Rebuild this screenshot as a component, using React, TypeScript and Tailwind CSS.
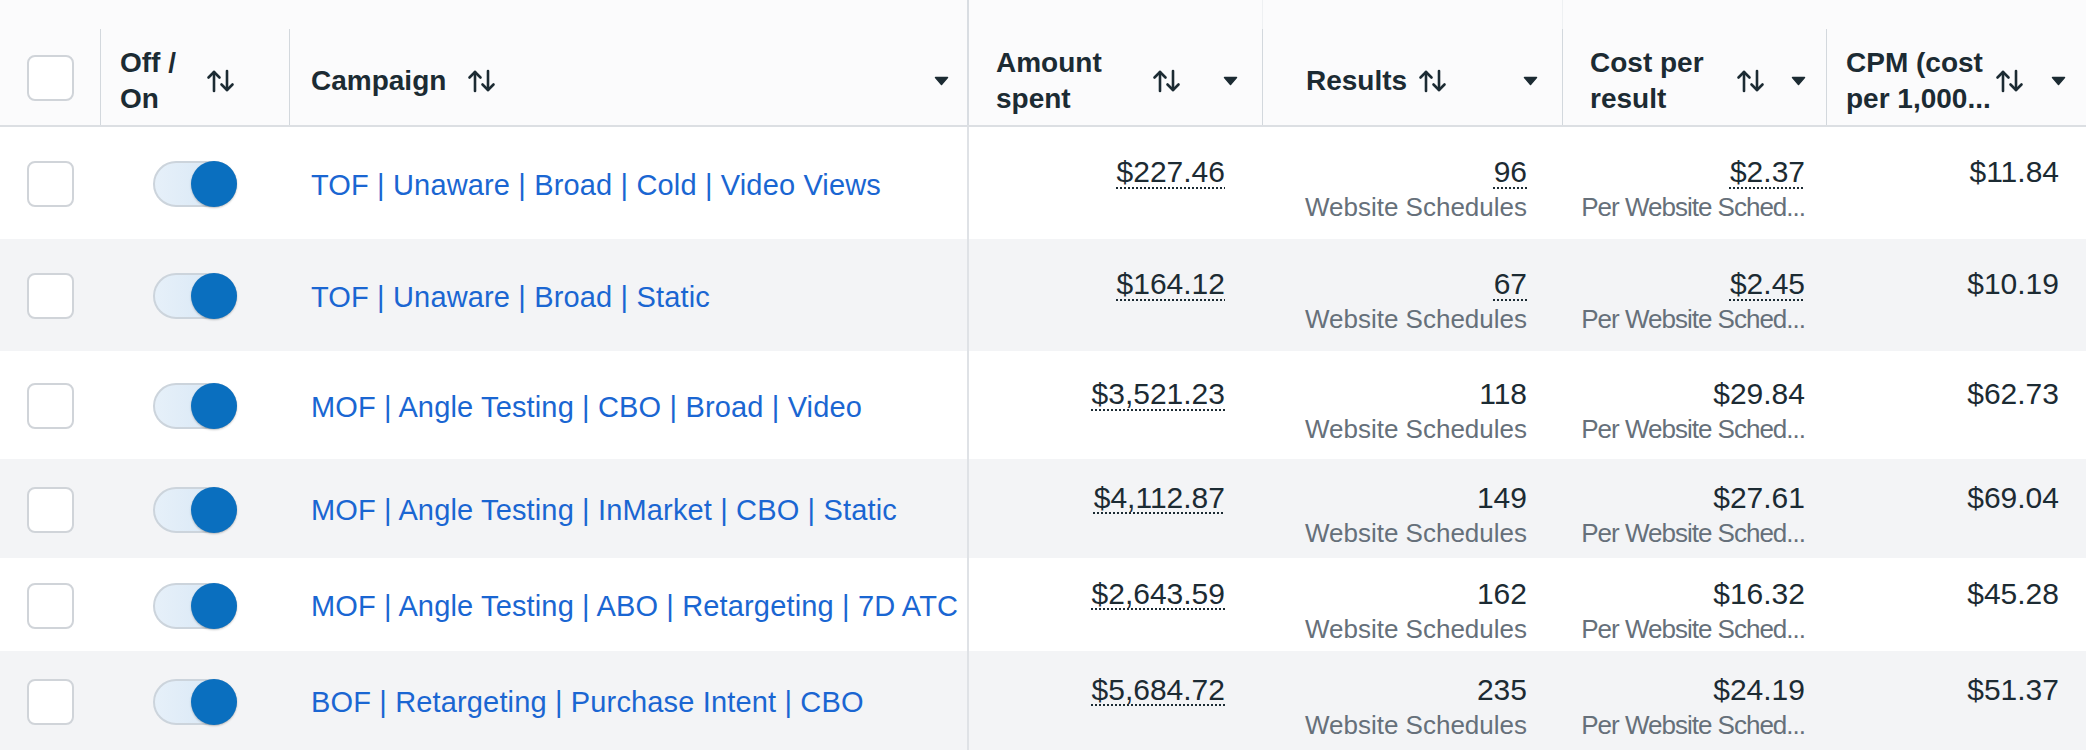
import React from "react";

const SortIcon = () => (
  <svg width="30" height="24" viewBox="0 0 30 24" fill="none" className="shrink-0">
    <path d="M8 22V3" stroke="#1c2b33" strokeWidth="2.6" strokeLinecap="round" />
    <path d="M2.5 8.5L8 3l5.5 5.5" stroke="#1c2b33" strokeWidth="2.6" strokeLinecap="round" strokeLinejoin="round" />
    <path d="M21 2v19" stroke="#1c2b33" strokeWidth="2.6" strokeLinecap="round" />
    <path d="M15.5 15.5L21 21l5.5-5.5" stroke="#1c2b33" strokeWidth="2.6" strokeLinecap="round" strokeLinejoin="round" />
  </svg>
);

const Caret = () => (
  <svg width="15" height="10" viewBox="0 0 15 10" className="shrink-0">
    <path d="M1.5 1.5h12L7.5 8.5z" fill="#1c2b33" stroke="#1c2b33" strokeWidth="1.5" strokeLinejoin="round" />
  </svg>
);

const Checkbox = () => (
  <div className="w-[47px] h-[46px] rounded-[8px] border-2 border-[#d0d4d9] bg-white" />
);

const Toggle = () => (
  <div className="relative w-[84px] h-[46px] rounded-full border-2 border-[#ccd4dc] bg-gradient-to-r from-[#e6f0f9] to-[#d6e6f5]">
    <div className="absolute -right-[2px] -top-[2px] w-[46px] h-[46px] rounded-full bg-[#0a6fbf] shadow-[0_1px_2px_rgba(0,0,0,0.25)]" />
  </div>
);

type Row = {
  name: string;
  spent: string;
  results: string;
  cost: string;
  cpm: string;
  ul: boolean;
  h: string;
  bg: string;
};

const rows: Row[] = [
  { name: "TOF | Unaware | Broad | Cold | Video Views", spent: "$227.46", results: "96", cost: "$2.37", cpm: "$11.84", ul: true, h: "h-[112px]", bg: "bg-white" },
  { name: "TOF | Unaware | Broad | Static", spent: "$164.12", results: "67", cost: "$2.45", cpm: "$10.19", ul: true, h: "h-[112px]", bg: "bg-[#f3f4f6]" },
  { name: "MOF | Angle Testing | CBO | Broad | Video", spent: "$3,521.23", results: "118", cost: "$29.84", cpm: "$62.73", ul: false, h: "h-[108px]", bg: "bg-white" },
  { name: "MOF | Angle Testing | InMarket | CBO | Static", spent: "$4,112.87", results: "149", cost: "$27.61", cpm: "$69.04", ul: false, h: "h-[99px]", bg: "bg-[#f3f4f6]" },
  { name: "MOF | Angle Testing | ABO | Retargeting | 7D ATC", spent: "$2,643.59", results: "162", cost: "$16.32", cpm: "$45.28", ul: false, h: "h-[93px]", bg: "bg-white" },
  { name: "BOF | Retargeting | Purchase Intent | CBO", spent: "$5,684.72", results: "235", cost: "$24.19", cpm: "$51.37", ul: false, h: "h-[99px]", bg: "bg-[#f3f4f6]" },
];

const Num = ({ v, ul, sub, tight }: { v: string; ul: boolean; sub?: string; tight?: boolean }) => (
  <div className="flex flex-col items-end pt-[12px]">
    <div className="leading-[36px] text-[30px] text-[#1c2b33] whitespace-nowrap">
      {ul ? (
        <span className="underline decoration-dotted decoration-[2px] underline-offset-[5px] decoration-[#1c2b33]">{v}</span>
      ) : (
        v
      )}
    </div>
    <div
      className={`h-[34px] leading-[34px] text-[26px] text-[#66707a] whitespace-nowrap ${
        tight ? "tracking-[-1px]" : ""
      }`}
    >
      {sub ?? ""}
    </div>
  </div>
);

const cols = "grid grid-cols-[100px_189px_678px_295px_300px_264px_260px]";

export default function App() {
  return (
    <div className="w-[2086px] h-[754px] overflow-hidden bg-white font-['Liberation_Sans',Arial,sans-serif]">
      {/* Header */}
      <div className={`${cols} h-[127px] bg-[#fbfbfc] border-b-2 border-[#dcdfe3] text-[28px] font-bold text-[#1c2b33]`}>
        <div className="pt-[29px] flex">
          <div className="flex-1 flex items-center pl-[27px] pt-[2px]">
            <Checkbox />
          </div>
        </div>
        <div className="pt-[29px] flex">
          <div className="flex-1 flex items-center border-l border-[#d3d8dd] pl-[19px] pt-[8px]">
            <div className="w-[86px] leading-[36px]">
              <div>Off /</div>
              <div>On</div>
            </div>
            <SortIcon />
          </div>
        </div>
        <div className="pt-[29px] flex">
          <div className="flex-1 flex items-center border-l border-[#d3d8dd] pl-[21px] pr-[18px] pt-[8px]">
            <span className="leading-[36px]">Campaign</span>
            <span className="ml-[21px]">
              <SortIcon />
            </span>
            <span className="ml-auto">
              <Caret />
            </span>
          </div>
        </div>
        <div className="flex border-l-2 border-[#d9dde2]">
          <div className="flex-1 flex items-center pt-[37px] pl-[27px] pr-[24px]">
            <div className="w-[156px] leading-[36px]">
              <div>Amount</div>
              <div>spent</div>
            </div>
            <SortIcon />
            <span className="ml-auto">
              <Caret />
            </span>
          </div>
        </div>
        <div className="flex flex-col border-l border-[#eef0f2]">
          <div className="h-[29px]" />
          <div className="flex-1 flex items-center pl-[43px] pr-[24px] -ml-px border-l border-[#d3d8dd] pt-[8px]">
            <span className="leading-[36px]">Results</span>
            <span className="ml-[11px]">
              <SortIcon />
            </span>
            <span className="ml-auto">
              <Caret />
            </span>
          </div>
        </div>
        <div className="flex flex-col border-l border-[#eef0f2]">
          <div className="h-[29px]" />
          <div className="flex-1 flex items-center pl-[27px] pr-[20px] -ml-px border-l border-[#d3d8dd] pt-[8px]">
            <div className="w-[146px] leading-[36px] whitespace-nowrap">
              <div>Cost per</div>
              <div>result</div>
            </div>
            <SortIcon />
            <span className="ml-auto">
              <Caret />
            </span>
          </div>
        </div>
        <div className="pt-[29px] flex">
          <div className="flex-1 flex items-center border-l border-[#d3d8dd] pl-[19px] pr-[20px] pt-[8px]">
            <div className="w-[149px] leading-[36px] whitespace-nowrap">
              <div>CPM (cost</div>
              <div>per 1,000...</div>
            </div>
            <SortIcon />
            <span className="ml-auto">
              <Caret />
            </span>
          </div>
        </div>
      </div>

      {/* Body */}
      {rows.map((r, i) => (
        <div key={i} className={`${cols} ${r.h} ${r.bg}`}>
          <div className="flex items-center pl-[27px] pt-[2px]">
            <Checkbox />
          </div>
          <div className="flex items-center justify-center pt-[2px]">
            <Toggle />
          </div>
          <div className="flex items-center pl-[22px] pt-[5px] text-[29px] tracking-[0.15px] text-[#1a66d2] whitespace-nowrap">
            {r.name}
          </div>
          <div className="flex items-center justify-end pr-[37px] border-l-2 border-[#dfe2e6]">
            <Num v={r.spent} ul={true} />
          </div>
          <div className="flex items-center justify-end pr-[35px]">
            <Num v={r.results} ul={r.ul} sub="Website Schedules" />
          </div>
          <div className="flex items-center justify-end pr-[21px]">
            <Num v={r.cost} ul={r.ul} sub="Per Website Sched..." tight />
          </div>
          <div className="flex items-center justify-end pr-[27px]">
            <Num v={r.cpm} ul={false} />
          </div>
        </div>
      ))}
    </div>
  );
}
